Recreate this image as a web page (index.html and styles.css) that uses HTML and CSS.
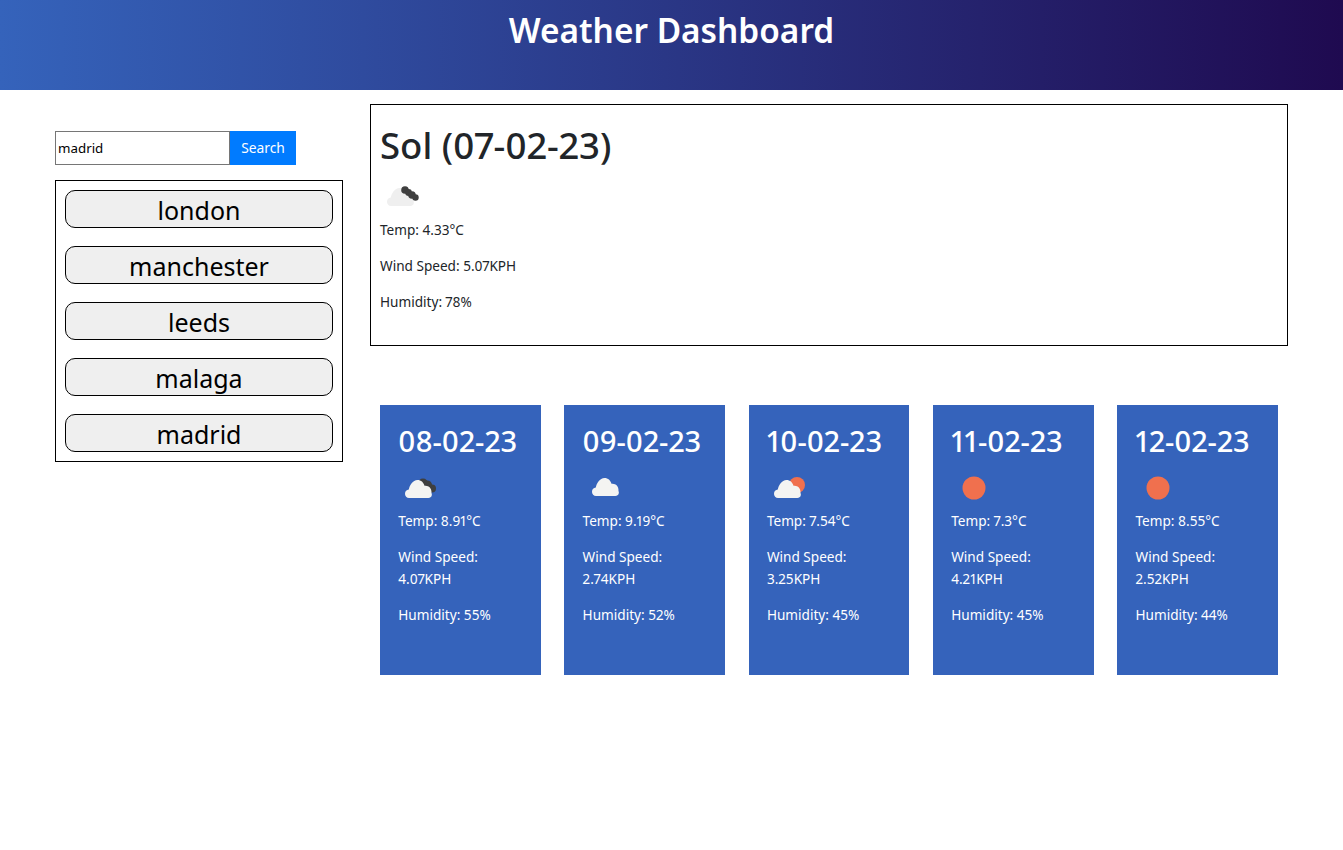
FILE: index.html
```html
<!DOCTYPE html>
<html lang="en">
<head>
<meta charset="utf-8">
<title>Weather Dashboard</title>
<link rel="stylesheet" href="styles.css">
</head>
<body>
<svg class="defs" width="0" height="0" aria-hidden="true">
  <symbol id="cloud" viewBox="0 0 50 50">
    <path d="M11 35a4 4 0 0 1-4-4.200c0-2.400 1.700-4 3.800-4.200C11.500 22.500 14.800 17 19.500 17c3.600 0 6 2.300 7 5.800 3.800-.8 7 2.300 7 6.200 0 .4 0 .7-.1 1 1 1 .6 5-3 5z"/>
  </symbol>
  <symbol id="sun" viewBox="0 0 50 50">
    <circle cx="23" cy="25" r="11.500"/>
  </symbol>
</svg>

<header class="top">
  <h1 class="top-title">Weather Dashboard</h1>
</header>

<main class="layout">
  <aside class="side">
    <form class="search">
      <input class="search-input" type="text" value="madrid">
      <button class="search-btn" type="button">Search</button>
    </form>
    <div class="history">
      <button class="city" type="button">london</button>
      <button class="city" type="button">manchester</button>
      <button class="city" type="button">leeds</button>
      <button class="city" type="button">malaga</button>
      <button class="city" type="button">madrid</button>
    </div>
  </aside>

  <section class="content">
    <div class="today">
      <h2 class="today-title">Sol (07-02-23)</h2>
      <svg class="icon" viewBox="0 0 50 50">
        <use href="#cloud" class="c-pale"/>
        <circle class="c-dark" cx="25" cy="19" r="3.800"/>
        <circle class="c-dark" cx="28.500" cy="21.500" r="3.400"/>
        <circle class="c-dark" cx="32" cy="24" r="3.800"/>
        <circle class="c-dark" cx="35.500" cy="26.500" r="3.200"/>
      </svg>
      <p class="stat">Temp: 4.33°C</p>
      <p class="stat">Wind Speed: 5.07KPH</p>
      <p class="stat">Humidity: 78%</p>
    </div>

    <div class="forecast">
      <article class="card">
        <h3 class="card-date">08-02-23</h3>
        <svg class="icon" viewBox="0 0 50 50">
          <circle class="c-dark" cx="25" cy="20.500" r="5"/>
          <circle class="c-dark" cx="29.500" cy="22" r="4.500"/>
          <circle class="c-dark" cx="34" cy="25.500" r="4"/>
          <use href="#cloud" class="c-white"/>
        </svg>
        <p class="stat">Temp: 8.91°C</p>
        <p class="stat">Wind Speed: 4.07KPH</p>
        <p class="stat">Humidity: 55%</p>
      </article>
      <article class="card">
        <h3 class="card-date">09-02-23</h3>
        <svg class="icon" viewBox="0 0 50 50">
          <use href="#cloud" class="c-white" x="2" y="-2"/>
        </svg>
        <p class="stat">Temp: 9.19°C</p>
        <p class="stat">Wind Speed: 2.74KPH</p>
        <p class="stat">Humidity: 52%</p>
      </article>
      <article class="card">
        <h3 class="card-date">10-02-23</h3>
        <svg class="icon" viewBox="0 0 50 50">
          <circle class="c-sun" cx="30" cy="22" r="8"/>
          <use href="#cloud" class="c-white"/>
        </svg>
        <p class="stat">Temp: 7.54°C</p>
        <p class="stat">Wind Speed: 3.25KPH</p>
        <p class="stat">Humidity: 45%</p>
      </article>
      <article class="card">
        <h3 class="card-date">11-02-23</h3>
        <svg class="icon" viewBox="0 0 50 50"><use href="#sun" class="c-sun"/></svg>
        <p class="stat">Temp: 7.3°C</p>
        <p class="stat">Wind Speed: 4.21KPH</p>
        <p class="stat">Humidity: 45%</p>
      </article>
      <article class="card">
        <h3 class="card-date">12-02-23</h3>
        <svg class="icon" viewBox="0 0 50 50"><use href="#sun" class="c-sun"/></svg>
        <p class="stat">Temp: 8.55°C</p>
        <p class="stat">Wind Speed: 2.52KPH</p>
        <p class="stat">Humidity: 44%</p>
      </article>
    </div>
  </section>
</main>
</body>
</html>
```
FILE: styles.css
```css
* { box-sizing: border-box; }

body {
  margin: 0;
  background: #fff;
  color: #212529;
  font-family: "Noto Sans", "Open Sans", sans-serif;
  font-size: 13.600px;
  line-height: 22px;
  font-variant-numeric: proportional-nums;
}

.defs { position: absolute; }

.top {
  height: 90px;
  background: linear-gradient(to right, #3563bb, #1f0a50);
  text-align: center;
}

.top-title {
  margin: 0;
  padding-top: 6px;
  color: #fff;
  font-size: 33.400px;
  font-weight: 600;
  line-height: 48px;
}

.layout {
  display: flex;
  align-items: flex-start;
  padding: 14px 55px 0;
  gap: 27px;
}

.side {
  flex: 0 0 288px;
  padding-top: 27px;
}

.search {
  display: flex;
  height: 34px;
  margin-bottom: 15px;
}

.search-input {
  width: 175px;
  height: 34px;
  padding: 1px 2px;
  border: 1px solid #767676;
  border-radius: 0;
  color: #000;
  font: 13.330px "Noto Sans", sans-serif;
}

.search-btn {
  width: 66px;
  height: 34px;
  padding: 0 0 2px;
  border: 0;
  background: #007bff;
  color: #fff;
  font: 13.800px "Noto Sans", sans-serif;
}

.history {
  display: flex;
  flex-direction: column;
  gap: 18px;
  height: 282px;
  padding: 9px;
  border: 1px solid #000;
}

.city {
  height: 38px;
  padding: 2px 0 0;
  border: 1px solid #000;
  border-radius: 10px;
  background: #efefef;
  color: #000;
  font: 25px/34px "Noto Sans", sans-serif;
}

.content {
  flex: 0 0 918px;
}

.today {
  height: 242px;
  padding: 16px 9px 0;
  border: 1px solid #000;
}

.today-title {
  margin: 0;
  font-size: 36.500px;
  font-weight: 500;
  line-height: 48px;
}

.today .icon { margin: 2px 0 -2px; }

.icon {
  display: block;
  width: 50px;
  height: 50px;
}

.stat { margin: 0 0 14px; }

.forecast {
  display: flex;
  gap: 23.500px;
  margin-top: 59px;
  padding: 0 10px;
}

.card {
  flex: 1;
  height: 270px;
  padding: 12px 18.300px 0;
  background: #3563bb;
  color: #fff;
}

.card .icon { margin: -2px 0 -3px; }

.card-date {
  margin: 0 -10px 0 0;
  font-size: 29px;
  font-weight: 500;
  line-height: 48px;
}

.c-pale { fill: #efefef; }
.c-white { fill: #f4f4f2; }
.c-dark { fill: #3f3f3f; }
.c-sun { fill: #f0704e; }
```
